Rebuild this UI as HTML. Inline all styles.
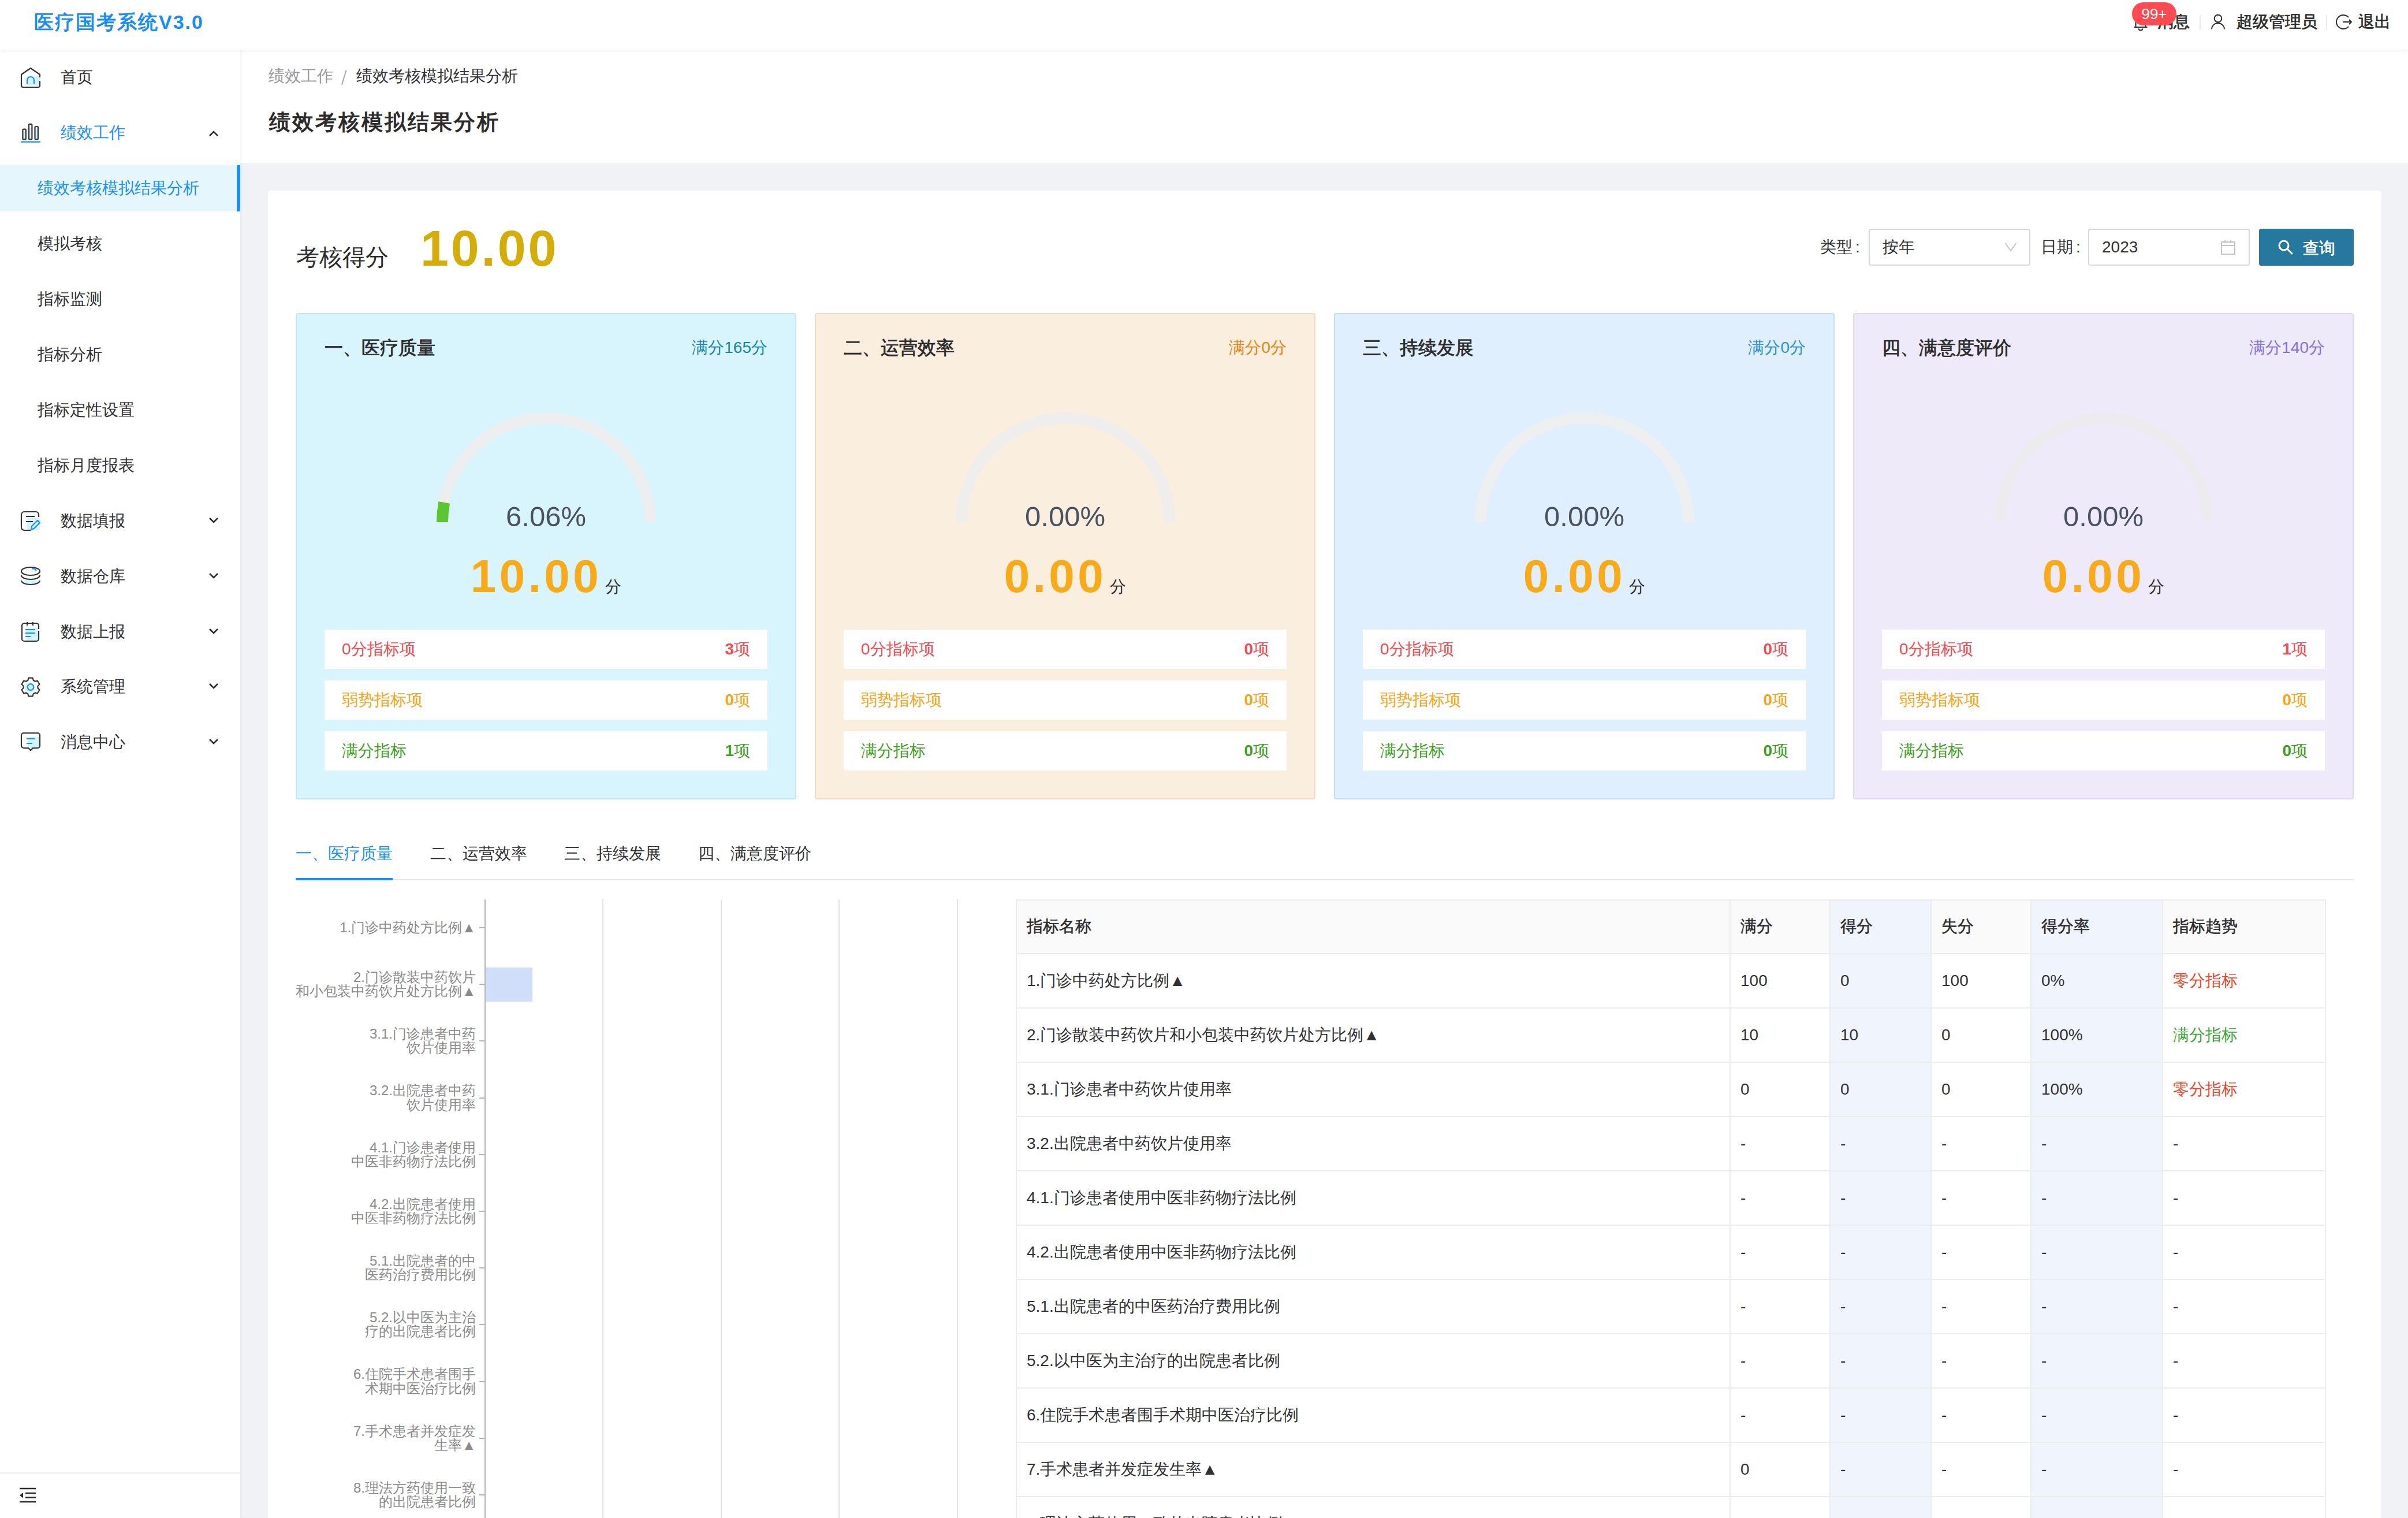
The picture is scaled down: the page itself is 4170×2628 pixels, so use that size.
<!DOCTYPE html><html><head><meta charset="utf-8"><style>
*{box-sizing:border-box;margin:0;padding:0}
html,body{width:4170px;height:2628px;overflow:hidden;background:#fff;font-family:"Liberation Sans",sans-serif;color:#303133}
.a{position:absolute;white-space:nowrap}
svg{position:absolute;overflow:visible}
</style></head><body>
<div class="a" style="left:416px;top:86px;width:3754px;height:2542px;background:#f0f2f5"></div>
<div class="a" style="left:416px;top:86px;width:3754px;height:196px;background:#fff"></div>
<div class="a" style="left:465px;top:112px;font-size:28px;line-height:40px;color:#97989b">绩效工作</div>
<svg style="left:588px;top:118px" width="16" height="32" viewBox="0 0 16 32"><line x1="11.5" y1="3.5" x2="4" y2="28.7" stroke="#a3a3a3" stroke-width="1.9"/></svg>
<div class="a" style="left:617px;top:112px;font-size:28px;line-height:40px;color:#303133">绩效考核模拟结果分析</div>
<div class="a" style="left:466px;top:184px;font-size:36.5px;line-height:56px;letter-spacing:3px;color:#2b2b2b;-webkit-text-stroke:1.2px #2b2b2b">绩效考核模拟结果分析</div>
<div class="a" style="left:464px;top:330px;width:3660px;height:2400px;background:#fff;border-radius:5px"></div>
<div class="a" style="left:513px;top:417px;font-size:40px;line-height:56px;color:#2b2b2b">考核得分</div>
<div class="a" style="left:728px;top:380px;font-size:88px;line-height:100px;font-weight:bold;color:#d4ad07;letter-spacing:3.8px">10.00</div>
<div class="a" style="left:3152px;top:408px;font-size:28px;line-height:40px;color:#303133">类型<span style="margin-left:5px">:</span></div>
<div class="a" style="left:3236px;top:396px;width:280px;height:64px;border:2px solid #d9d9d9;border-radius:4px;background:#fff"></div>
<div class="a" style="left:3260px;top:408px;font-size:28px;line-height:40px;color:#303133">按年</div>
<svg style="left:3471px;top:419px" width="22" height="18" viewBox="0 0 22 18"><path d="M1.5 2 L11 15 L20.5 2" fill="none" stroke="#c2c2c2" stroke-width="1.9"/></svg>
<div class="a" style="left:3534px;top:408px;font-size:28px;line-height:40px;color:#303133">日期<span style="margin-left:5px">:</span></div>
<div class="a" style="left:3616px;top:396px;width:280px;height:64px;border:2px solid #d9d9d9;border-radius:4px;background:#fff"></div>
<div class="a" style="left:3640px;top:408px;font-size:28px;line-height:40px;color:#303133">2023</div>
<svg style="left:3845px;top:414px" width="28" height="28" viewBox="0 0 28 28"><rect x="2" y="5" width="23" height="21" fill="none" stroke="#c4c4c4" stroke-width="2"/><line x1="2" y1="11" x2="25" y2="11" stroke="#c4c4c4" stroke-width="2"/><line x1="8" y1="1.5" x2="8" y2="7" stroke="#c4c4c4" stroke-width="2"/><line x1="18" y1="1.5" x2="18" y2="7" stroke="#c4c4c4" stroke-width="2"/></svg>
<div class="a" style="left:3912px;top:396px;width:164px;height:64px;background:#27789f;border-radius:4px"></div>
<svg style="left:3944px;top:414px" width="28" height="28" viewBox="0 0 28 28"><circle cx="11" cy="11" r="8" fill="none" stroke="#fff" stroke-width="3"/><line x1="17" y1="17" x2="25" y2="25" stroke="#fff" stroke-width="3" stroke-linecap="round"/></svg>
<div class="a" style="left:3988px;top:410px;font-size:28px;line-height:40px;color:#fff;-webkit-text-stroke:0.6px #fff">查询</div>
<div class="a" style="left:512px;top:542px;width:867px;height:842px;background:#d8f4fc;border:2px solid #c8e5ee;border-radius:4px"></div>
<div class="a" style="left:562px;top:582px;font-size:32px;line-height:40px;color:#2b2b2b;-webkit-text-stroke:0.8px #2b2b2b">一、医疗质量</div>
<div class="a" style="right:2841px;top:582px;font-size:28px;line-height:40px;color:#1687a9">满分165分</div>
<svg style="left:745.5px;top:704px" width="400" height="210" viewBox="745.5 704 400 210"><path d="M765.5 904 A180 180 0 0 1 1125.5 904" fill="none" stroke="#eceef0" stroke-width="20"/>
<path d="M765.5 904 A180 180 0 0 1 768.75 869.94" fill="none" stroke="#5bc72f" stroke-width="20"/>
</svg>
<div class="a" style="left:795.5px;top:862px;width:300px;text-align:center;font-size:49px;line-height:64px;color:#4a5261">6.06%</div>
<div class="a" style="left:512px;top:952px;width:867px;text-align:center;font-size:0"><span style="font-size:80px;line-height:92px;font-weight:bold;color:#f9aa17;letter-spacing:5.5px">10.00</span><span style="font-size:28px;line-height:40px;color:#2b2b2b;margin-left:6px">分</span></div>
<div class="a" style="left:562px;top:1090px;width:767px;height:68px;background:#fff"></div>
<div class="a" style="left:592px;top:1104px;font-size:28px;line-height:40px;color:#f54a50">0分指标项</div>
<div class="a" style="right:2871px;top:1104px;font-size:28px;line-height:40px;color:#f54a50"><b>3</b>项</div>
<div class="a" style="left:562px;top:1178px;width:767px;height:68px;background:#fff"></div>
<div class="a" style="left:592px;top:1192px;font-size:28px;line-height:40px;color:#f6a516">弱势指标项</div>
<div class="a" style="right:2871px;top:1192px;font-size:28px;line-height:40px;color:#f6a516"><b>0</b>项</div>
<div class="a" style="left:562px;top:1266px;width:767px;height:68px;background:#fff"></div>
<div class="a" style="left:592px;top:1280px;font-size:28px;line-height:40px;color:#3c9f22">满分指标</div>
<div class="a" style="right:2871px;top:1280px;font-size:28px;line-height:40px;color:#3c9f22"><b>1</b>项</div>
<div class="a" style="left:1411px;top:542px;width:867px;height:842px;background:#faeedf;border:2px solid #ecdcc8;border-radius:4px"></div>
<div class="a" style="left:1461px;top:582px;font-size:32px;line-height:40px;color:#2b2b2b;-webkit-text-stroke:0.8px #2b2b2b">二、运营效率</div>
<div class="a" style="right:1942px;top:582px;font-size:28px;line-height:40px;color:#e9830f">满分0分</div>
<svg style="left:1644.5px;top:704px" width="400" height="210" viewBox="1644.5 704 400 210"><path d="M1664.5 904 A180 180 0 0 1 2024.5 904" fill="none" stroke="#efeeec" stroke-width="20"/>
</svg>
<div class="a" style="left:1694.5px;top:862px;width:300px;text-align:center;font-size:49px;line-height:64px;color:#4a5261">0.00%</div>
<div class="a" style="left:1411px;top:952px;width:867px;text-align:center;font-size:0"><span style="font-size:80px;line-height:92px;font-weight:bold;color:#f9aa17;letter-spacing:5.5px">0.00</span><span style="font-size:28px;line-height:40px;color:#2b2b2b;margin-left:6px">分</span></div>
<div class="a" style="left:1461px;top:1090px;width:767px;height:68px;background:#fff"></div>
<div class="a" style="left:1491px;top:1104px;font-size:28px;line-height:40px;color:#f54a50">0分指标项</div>
<div class="a" style="right:1972px;top:1104px;font-size:28px;line-height:40px;color:#f54a50"><b>0</b>项</div>
<div class="a" style="left:1461px;top:1178px;width:767px;height:68px;background:#fff"></div>
<div class="a" style="left:1491px;top:1192px;font-size:28px;line-height:40px;color:#f6a516">弱势指标项</div>
<div class="a" style="right:1972px;top:1192px;font-size:28px;line-height:40px;color:#f6a516"><b>0</b>项</div>
<div class="a" style="left:1461px;top:1266px;width:767px;height:68px;background:#fff"></div>
<div class="a" style="left:1491px;top:1280px;font-size:28px;line-height:40px;color:#3c9f22">满分指标</div>
<div class="a" style="right:1972px;top:1280px;font-size:28px;line-height:40px;color:#3c9f22"><b>0</b>项</div>
<div class="a" style="left:2310px;top:542px;width:867px;height:842px;background:#dfeffd;border:2px solid #c8dcee;border-radius:4px"></div>
<div class="a" style="left:2360px;top:582px;font-size:32px;line-height:40px;color:#2b2b2b;-webkit-text-stroke:0.8px #2b2b2b">三、持续发展</div>
<div class="a" style="right:1043px;top:582px;font-size:28px;line-height:40px;color:#2c90d6">满分0分</div>
<svg style="left:2543.5px;top:704px" width="400" height="210" viewBox="2543.5 704 400 210"><path d="M2563.5 904 A180 180 0 0 1 2923.5 904" fill="none" stroke="#eeeff1" stroke-width="20"/>
</svg>
<div class="a" style="left:2593.5px;top:862px;width:300px;text-align:center;font-size:49px;line-height:64px;color:#4a5261">0.00%</div>
<div class="a" style="left:2310px;top:952px;width:867px;text-align:center;font-size:0"><span style="font-size:80px;line-height:92px;font-weight:bold;color:#f9aa17;letter-spacing:5.5px">0.00</span><span style="font-size:28px;line-height:40px;color:#2b2b2b;margin-left:6px">分</span></div>
<div class="a" style="left:2360px;top:1090px;width:767px;height:68px;background:#fff"></div>
<div class="a" style="left:2390px;top:1104px;font-size:28px;line-height:40px;color:#f54a50">0分指标项</div>
<div class="a" style="right:1073px;top:1104px;font-size:28px;line-height:40px;color:#f54a50"><b>0</b>项</div>
<div class="a" style="left:2360px;top:1178px;width:767px;height:68px;background:#fff"></div>
<div class="a" style="left:2390px;top:1192px;font-size:28px;line-height:40px;color:#f6a516">弱势指标项</div>
<div class="a" style="right:1073px;top:1192px;font-size:28px;line-height:40px;color:#f6a516"><b>0</b>项</div>
<div class="a" style="left:2360px;top:1266px;width:767px;height:68px;background:#fff"></div>
<div class="a" style="left:2390px;top:1280px;font-size:28px;line-height:40px;color:#3c9f22">满分指标</div>
<div class="a" style="right:1073px;top:1280px;font-size:28px;line-height:40px;color:#3c9f22"><b>0</b>项</div>
<div class="a" style="left:3209px;top:542px;width:867px;height:842px;background:#eeeafa;border:2px solid #dfdaee;border-radius:4px"></div>
<div class="a" style="left:3259px;top:582px;font-size:32px;line-height:40px;color:#2b2b2b;-webkit-text-stroke:0.8px #2b2b2b">四、满意度评价</div>
<div class="a" style="right:144px;top:582px;font-size:28px;line-height:40px;color:#8471de">满分140分</div>
<svg style="left:3442.5px;top:704px" width="400" height="210" viewBox="3442.5 704 400 210"><path d="M3462.5 904 A180 180 0 0 1 3822.5 904" fill="none" stroke="#ecebef" stroke-width="20"/>
</svg>
<div class="a" style="left:3492.5px;top:862px;width:300px;text-align:center;font-size:49px;line-height:64px;color:#4a5261">0.00%</div>
<div class="a" style="left:3209px;top:952px;width:867px;text-align:center;font-size:0"><span style="font-size:80px;line-height:92px;font-weight:bold;color:#f9aa17;letter-spacing:5.5px">0.00</span><span style="font-size:28px;line-height:40px;color:#2b2b2b;margin-left:6px">分</span></div>
<div class="a" style="left:3259px;top:1090px;width:767px;height:68px;background:#fff"></div>
<div class="a" style="left:3289px;top:1104px;font-size:28px;line-height:40px;color:#f54a50">0分指标项</div>
<div class="a" style="right:174px;top:1104px;font-size:28px;line-height:40px;color:#f54a50"><b>1</b>项</div>
<div class="a" style="left:3259px;top:1178px;width:767px;height:68px;background:#fff"></div>
<div class="a" style="left:3289px;top:1192px;font-size:28px;line-height:40px;color:#f6a516">弱势指标项</div>
<div class="a" style="right:174px;top:1192px;font-size:28px;line-height:40px;color:#f6a516"><b>0</b>项</div>
<div class="a" style="left:3259px;top:1266px;width:767px;height:68px;background:#fff"></div>
<div class="a" style="left:3289px;top:1280px;font-size:28px;line-height:40px;color:#3c9f22">满分指标</div>
<div class="a" style="right:174px;top:1280px;font-size:28px;line-height:40px;color:#3c9f22"><b>0</b>项</div>
<div class="a" style="left:512px;top:1522px;width:3564px;height:2px;background:#e4e7ed"></div>
<div class="a" style="left:512px;top:1458px;font-size:28px;line-height:40px;color:#1890ff">一、医疗质量</div>
<div class="a" style="left:745px;top:1458px;font-size:28px;line-height:40px;color:#303133">二、运营效率</div>
<div class="a" style="left:977px;top:1458px;font-size:28px;line-height:40px;color:#303133">三、持续发展</div>
<div class="a" style="left:1209px;top:1458px;font-size:28px;line-height:40px;color:#303133">四、满意度评价</div>
<div class="a" style="left:512px;top:1520px;width:168px;height:4px;background:#1890ff"></div>
<div class="a" style="left:839px;top:1557px;width:2px;height:1100px;background:#b6b6b6"></div>
<div class="a" style="left:1043px;top:1557px;width:2px;height:1100px;background:#e3e3e3"></div>
<div class="a" style="left:1248px;top:1557px;width:2px;height:1100px;background:#e3e3e3"></div>
<div class="a" style="left:1452px;top:1557px;width:2px;height:1100px;background:#e3e3e3"></div>
<div class="a" style="left:1657px;top:1557px;width:2px;height:1100px;background:#e3e3e3"></div>
<div class="a" style="left:830px;top:1605.0px;width:10px;height:2px;background:#b6b6b6"></div>
<div class="a" style="right:3346px;top:1593.8px;text-align:right;font-size:24px;line-height:24.3px;color:#8a8a8a">1.门诊中药处方比例▲</div>
<div class="a" style="left:830px;top:1703.2px;width:10px;height:2px;background:#b6b6b6"></div>
<div class="a" style="right:3346px;top:1679.9px;text-align:right;font-size:24px;line-height:24.3px;color:#8a8a8a">2.门诊散装中药饮片<br>和小包装中药饮片处方比例▲</div>
<div class="a" style="left:830px;top:1801.4px;width:10px;height:2px;background:#b6b6b6"></div>
<div class="a" style="right:3346px;top:1778.1px;text-align:right;font-size:24px;line-height:24.3px;color:#8a8a8a">3.1.门诊患者中药<br>饮片使用率</div>
<div class="a" style="left:830px;top:1899.6px;width:10px;height:2px;background:#b6b6b6"></div>
<div class="a" style="right:3346px;top:1876.3px;text-align:right;font-size:24px;line-height:24.3px;color:#8a8a8a">3.2.出院患者中药<br>饮片使用率</div>
<div class="a" style="left:830px;top:1997.8px;width:10px;height:2px;background:#b6b6b6"></div>
<div class="a" style="right:3346px;top:1974.5px;text-align:right;font-size:24px;line-height:24.3px;color:#8a8a8a">4.1.门诊患者使用<br>中医非药物疗法比例</div>
<div class="a" style="left:830px;top:2096.0px;width:10px;height:2px;background:#b6b6b6"></div>
<div class="a" style="right:3346px;top:2072.7px;text-align:right;font-size:24px;line-height:24.3px;color:#8a8a8a">4.2.出院患者使用<br>中医非药物疗法比例</div>
<div class="a" style="left:830px;top:2194.2px;width:10px;height:2px;background:#b6b6b6"></div>
<div class="a" style="right:3346px;top:2170.9px;text-align:right;font-size:24px;line-height:24.3px;color:#8a8a8a">5.1.出院患者的中<br>医药治疗费用比例</div>
<div class="a" style="left:830px;top:2292.4px;width:10px;height:2px;background:#b6b6b6"></div>
<div class="a" style="right:3346px;top:2269.1px;text-align:right;font-size:24px;line-height:24.3px;color:#8a8a8a">5.2.以中医为主治<br>疗的出院患者比例</div>
<div class="a" style="left:830px;top:2390.6px;width:10px;height:2px;background:#b6b6b6"></div>
<div class="a" style="right:3346px;top:2367.3px;text-align:right;font-size:24px;line-height:24.3px;color:#8a8a8a">6.住院手术患者围手<br>术期中医治疗比例</div>
<div class="a" style="left:830px;top:2488.8px;width:10px;height:2px;background:#b6b6b6"></div>
<div class="a" style="right:3346px;top:2465.5px;text-align:right;font-size:24px;line-height:24.3px;color:#8a8a8a">7.手术患者并发症发<br>生率▲</div>
<div class="a" style="left:830px;top:2587.0px;width:10px;height:2px;background:#b6b6b6"></div>
<div class="a" style="right:3346px;top:2563.7px;text-align:right;font-size:24px;line-height:24.3px;color:#8a8a8a">8.理法方药使用一致<br>的出院患者比例</div>
<div class="a" style="left:841px;top:1675px;width:81px;height:59px;background:#d0defa"></div>
<div class="a" style="left:3169px;top:1557px;width:175px;height:1100px;background:#eff4fd"></div>
<div class="a" style="left:3517px;top:1557px;width:228px;height:1100px;background:#eff4fd"></div>
<div class="a" style="left:1760px;top:1557px;width:1409px;height:94px;background:#fafafa"></div>
<div class="a" style="left:3344px;top:1557px;width:173px;height:94px;background:#fafafa"></div>
<div class="a" style="left:3745px;top:1557px;width:282px;height:94px;background:#fafafa"></div>
<div class="a" style="left:1760px;top:1557px;width:2267px;height:2px;background:#ebecee"></div>
<div class="a" style="left:1760px;top:1650px;width:2267px;height:2px;background:#ebecee"></div>
<div class="a" style="left:1760px;top:1744px;width:2267px;height:2px;background:#ebecee"></div>
<div class="a" style="left:1760px;top:1838px;width:2267px;height:2px;background:#ebecee"></div>
<div class="a" style="left:1760px;top:1932px;width:2267px;height:2px;background:#ebecee"></div>
<div class="a" style="left:1760px;top:2026px;width:2267px;height:2px;background:#ebecee"></div>
<div class="a" style="left:1760px;top:2120px;width:2267px;height:2px;background:#ebecee"></div>
<div class="a" style="left:1760px;top:2214px;width:2267px;height:2px;background:#ebecee"></div>
<div class="a" style="left:1760px;top:2308px;width:2267px;height:2px;background:#ebecee"></div>
<div class="a" style="left:1760px;top:2402px;width:2267px;height:2px;background:#ebecee"></div>
<div class="a" style="left:1760px;top:2496px;width:2267px;height:2px;background:#ebecee"></div>
<div class="a" style="left:1760px;top:2590px;width:2267px;height:2px;background:#ebecee"></div>
<div class="a" style="left:1760px;top:2684px;width:2267px;height:2px;background:#ebecee"></div>
<div class="a" style="left:1759px;top:1557px;width:2px;height:1100px;background:#ebecee"></div>
<div class="a" style="left:2995px;top:1557px;width:2px;height:1100px;background:#ebecee"></div>
<div class="a" style="left:3168px;top:1557px;width:2px;height:1100px;background:#ebecee"></div>
<div class="a" style="left:3343px;top:1557px;width:2px;height:1100px;background:#ebecee"></div>
<div class="a" style="left:3516px;top:1557px;width:2px;height:1100px;background:#ebecee"></div>
<div class="a" style="left:3744px;top:1557px;width:2px;height:1100px;background:#ebecee"></div>
<div class="a" style="left:4026px;top:1557px;width:2px;height:1100px;background:#ebecee"></div>
<div class="a" style="left:1778px;top:1584px;font-size:28px;line-height:40px;color:#2b2b2b;-webkit-text-stroke:0.5px #2b2b2b">指标名称</div>
<div class="a" style="left:3014px;top:1584px;font-size:28px;line-height:40px;color:#2b2b2b;-webkit-text-stroke:0.5px #2b2b2b">满分</div>
<div class="a" style="left:3187px;top:1584px;font-size:28px;line-height:40px;color:#2b2b2b;-webkit-text-stroke:0.5px #2b2b2b">得分</div>
<div class="a" style="left:3362px;top:1584px;font-size:28px;line-height:40px;color:#2b2b2b;-webkit-text-stroke:0.5px #2b2b2b">失分</div>
<div class="a" style="left:3535px;top:1584px;font-size:28px;line-height:40px;color:#2b2b2b;-webkit-text-stroke:0.5px #2b2b2b">得分率</div>
<div class="a" style="left:3763px;top:1584px;font-size:28px;line-height:40px;color:#2b2b2b;-webkit-text-stroke:0.5px #2b2b2b">指标趋势</div>
<div class="a" style="left:1778px;top:1678px;font-size:28px;line-height:40px;color:#303133">1.门诊中药处方比例▲</div>
<div class="a" style="left:3014px;top:1678px;font-size:28px;line-height:40px;color:#303133">100</div>
<div class="a" style="left:3187px;top:1678px;font-size:28px;line-height:40px;color:#303133">0</div>
<div class="a" style="left:3362px;top:1678px;font-size:28px;line-height:40px;color:#303133">100</div>
<div class="a" style="left:3535px;top:1678px;font-size:28px;line-height:40px;color:#303133">0%</div>
<div class="a" style="left:3763px;top:1678px;font-size:28px;line-height:40px;color:#e5492d">零分指标</div>
<div class="a" style="left:1778px;top:1772px;font-size:28px;line-height:40px;color:#303133">2.门诊散装中药饮片和小包装中药饮片处方比例▲</div>
<div class="a" style="left:3014px;top:1772px;font-size:28px;line-height:40px;color:#303133">10</div>
<div class="a" style="left:3187px;top:1772px;font-size:28px;line-height:40px;color:#303133">10</div>
<div class="a" style="left:3362px;top:1772px;font-size:28px;line-height:40px;color:#303133">0</div>
<div class="a" style="left:3535px;top:1772px;font-size:28px;line-height:40px;color:#303133">100%</div>
<div class="a" style="left:3763px;top:1772px;font-size:28px;line-height:40px;color:#3aa434">满分指标</div>
<div class="a" style="left:1778px;top:1866px;font-size:28px;line-height:40px;color:#303133">3.1.门诊患者中药饮片使用率</div>
<div class="a" style="left:3014px;top:1866px;font-size:28px;line-height:40px;color:#303133">0</div>
<div class="a" style="left:3187px;top:1866px;font-size:28px;line-height:40px;color:#303133">0</div>
<div class="a" style="left:3362px;top:1866px;font-size:28px;line-height:40px;color:#303133">0</div>
<div class="a" style="left:3535px;top:1866px;font-size:28px;line-height:40px;color:#303133">100%</div>
<div class="a" style="left:3763px;top:1866px;font-size:28px;line-height:40px;color:#e5492d">零分指标</div>
<div class="a" style="left:1778px;top:1960px;font-size:28px;line-height:40px;color:#303133">3.2.出院患者中药饮片使用率</div>
<div class="a" style="left:3014px;top:1960px;font-size:28px;line-height:40px;color:#303133">-</div>
<div class="a" style="left:3187px;top:1960px;font-size:28px;line-height:40px;color:#303133">-</div>
<div class="a" style="left:3362px;top:1960px;font-size:28px;line-height:40px;color:#303133">-</div>
<div class="a" style="left:3535px;top:1960px;font-size:28px;line-height:40px;color:#303133">-</div>
<div class="a" style="left:3763px;top:1960px;font-size:28px;line-height:40px;color:#303133">-</div>
<div class="a" style="left:1778px;top:2054px;font-size:28px;line-height:40px;color:#303133">4.1.门诊患者使用中医非药物疗法比例</div>
<div class="a" style="left:3014px;top:2054px;font-size:28px;line-height:40px;color:#303133">-</div>
<div class="a" style="left:3187px;top:2054px;font-size:28px;line-height:40px;color:#303133">-</div>
<div class="a" style="left:3362px;top:2054px;font-size:28px;line-height:40px;color:#303133">-</div>
<div class="a" style="left:3535px;top:2054px;font-size:28px;line-height:40px;color:#303133">-</div>
<div class="a" style="left:3763px;top:2054px;font-size:28px;line-height:40px;color:#303133">-</div>
<div class="a" style="left:1778px;top:2148px;font-size:28px;line-height:40px;color:#303133">4.2.出院患者使用中医非药物疗法比例</div>
<div class="a" style="left:3014px;top:2148px;font-size:28px;line-height:40px;color:#303133">-</div>
<div class="a" style="left:3187px;top:2148px;font-size:28px;line-height:40px;color:#303133">-</div>
<div class="a" style="left:3362px;top:2148px;font-size:28px;line-height:40px;color:#303133">-</div>
<div class="a" style="left:3535px;top:2148px;font-size:28px;line-height:40px;color:#303133">-</div>
<div class="a" style="left:3763px;top:2148px;font-size:28px;line-height:40px;color:#303133">-</div>
<div class="a" style="left:1778px;top:2242px;font-size:28px;line-height:40px;color:#303133">5.1.出院患者的中医药治疗费用比例</div>
<div class="a" style="left:3014px;top:2242px;font-size:28px;line-height:40px;color:#303133">-</div>
<div class="a" style="left:3187px;top:2242px;font-size:28px;line-height:40px;color:#303133">-</div>
<div class="a" style="left:3362px;top:2242px;font-size:28px;line-height:40px;color:#303133">-</div>
<div class="a" style="left:3535px;top:2242px;font-size:28px;line-height:40px;color:#303133">-</div>
<div class="a" style="left:3763px;top:2242px;font-size:28px;line-height:40px;color:#303133">-</div>
<div class="a" style="left:1778px;top:2336px;font-size:28px;line-height:40px;color:#303133">5.2.以中医为主治疗的出院患者比例</div>
<div class="a" style="left:3014px;top:2336px;font-size:28px;line-height:40px;color:#303133">-</div>
<div class="a" style="left:3187px;top:2336px;font-size:28px;line-height:40px;color:#303133">-</div>
<div class="a" style="left:3362px;top:2336px;font-size:28px;line-height:40px;color:#303133">-</div>
<div class="a" style="left:3535px;top:2336px;font-size:28px;line-height:40px;color:#303133">-</div>
<div class="a" style="left:3763px;top:2336px;font-size:28px;line-height:40px;color:#303133">-</div>
<div class="a" style="left:1778px;top:2430px;font-size:28px;line-height:40px;color:#303133">6.住院手术患者围手术期中医治疗比例</div>
<div class="a" style="left:3014px;top:2430px;font-size:28px;line-height:40px;color:#303133">-</div>
<div class="a" style="left:3187px;top:2430px;font-size:28px;line-height:40px;color:#303133">-</div>
<div class="a" style="left:3362px;top:2430px;font-size:28px;line-height:40px;color:#303133">-</div>
<div class="a" style="left:3535px;top:2430px;font-size:28px;line-height:40px;color:#303133">-</div>
<div class="a" style="left:3763px;top:2430px;font-size:28px;line-height:40px;color:#303133">-</div>
<div class="a" style="left:1778px;top:2524px;font-size:28px;line-height:40px;color:#303133">7.手术患者并发症发生率▲</div>
<div class="a" style="left:3014px;top:2524px;font-size:28px;line-height:40px;color:#303133">0</div>
<div class="a" style="left:3187px;top:2524px;font-size:28px;line-height:40px;color:#303133">-</div>
<div class="a" style="left:3362px;top:2524px;font-size:28px;line-height:40px;color:#303133">-</div>
<div class="a" style="left:3535px;top:2524px;font-size:28px;line-height:40px;color:#303133">-</div>
<div class="a" style="left:3763px;top:2524px;font-size:28px;line-height:40px;color:#303133">-</div>
<div class="a" style="left:1778px;top:2618px;font-size:28px;line-height:40px;color:#303133">8.理法方药使用一致的出院患者比例</div>
<div class="a" style="left:3014px;top:2618px;font-size:28px;line-height:40px;color:#303133">-</div>
<div class="a" style="left:3187px;top:2618px;font-size:28px;line-height:40px;color:#303133">-</div>
<div class="a" style="left:3362px;top:2618px;font-size:28px;line-height:40px;color:#303133">-</div>
<div class="a" style="left:3535px;top:2618px;font-size:28px;line-height:40px;color:#303133">-</div>
<div class="a" style="left:3763px;top:2618px;font-size:28px;line-height:40px;color:#303133">-</div>
<div class="a" style="left:0;top:86px;width:416px;height:2542px;background:#fff;box-shadow:2px 0 6px rgba(0,21,41,.05)"></div>
<div class="a" style="left:0;top:286px;width:416px;height:80px;background:#e6f6fd"></div>
<div class="a" style="left:410px;top:286px;width:6px;height:80px;background:#1890ff"></div>
<div class="a" style="left:105px;top:114px;font-size:28px;line-height:40px;color:#303133">首页</div>
<svg style="left:36px;top:117px" width="34" height="35" viewBox="0 0 34 35"><rect x="10" y="15" width="23" height="16" fill="#d4f3fd"/><path d="M33 17 V12 L17 1 L1 12 V31 a3 3 0 0 0 3 3 H30 a3 3 0 0 0 3 -3 V23" fill="none" stroke="#333" stroke-width="2.2" stroke-linejoin="round"/><path d="M11 28 V22 a6 6 0 0 1 12 0 V28" fill="none" stroke="#1890ff" stroke-width="2.2"/></svg>
<div class="a" style="left:105px;top:210px;font-size:28px;line-height:40px;color:#1890ff">绩效工作</div>
<svg style="left:36px;top:213px" width="34" height="35" viewBox="0 0 34 35"><rect x="3.4" y="16" width="5.4" height="12" fill="#d4f3fd"/><rect x="14" y="8" width="5.4" height="20" fill="#d4f3fd"/><rect x="24.5" y="10" width="5.4" height="18" fill="#d4f3fd"/><rect x="3.4" y="10.6" width="5.4" height="17.6" rx="1.5" fill="none" stroke="#333" stroke-width="2.2"/><rect x="14" y="1.8" width="5.4" height="26.4" rx="1.5" fill="none" stroke="#333" stroke-width="2.2"/><rect x="24.5" y="6" width="5.4" height="22.2" rx="1.5" fill="none" stroke="#333" stroke-width="2.2"/><line x1="0" y1="32.6" x2="34" y2="32.6" stroke="#1890ff" stroke-width="2.4"/></svg>
<svg style="left:361px;top:225px" width="18" height="12" viewBox="0 0 18 12"><path d="M2 10 L9 3 L16 10" fill="none" stroke="#2b2b2b" stroke-width="2.6"/></svg>
<div class="a" style="left:65px;top:306px;font-size:28px;line-height:40px;color:#1890ff">绩效考核模拟结果分析</div>
<div class="a" style="left:65px;top:402px;font-size:28px;line-height:40px;color:#303133">模拟考核</div>
<div class="a" style="left:65px;top:498px;font-size:28px;line-height:40px;color:#303133">指标监测</div>
<div class="a" style="left:65px;top:594px;font-size:28px;line-height:40px;color:#303133">指标分析</div>
<div class="a" style="left:65px;top:690px;font-size:28px;line-height:40px;color:#303133">指标定性设置</div>
<div class="a" style="left:65px;top:786px;font-size:28px;line-height:40px;color:#303133">指标月度报表</div>
<div class="a" style="left:105px;top:882px;font-size:28px;line-height:40px;color:#303133">数据填报</div>
<svg style="left:36px;top:885px" width="34" height="35" viewBox="0 0 34 35"><rect x="11" y="11" width="22" height="22" rx="3" fill="#d4f3fd"/><path d="M17 33 H6 a5 5 0 0 1 -5 -5 V6 a5 5 0 0 1 5 -5 H26 a5 5 0 0 1 5 5 V10" fill="none" stroke="#333" stroke-width="2.2"/><path d="M9 9 H24 M9 18 H21" stroke="#333" stroke-width="2.2"/><path d="M18 32 L19 26 L29 16 L33 20 L23 30 Z" fill="none" stroke="#1890ff" stroke-width="2.2" stroke-linejoin="round"/></svg>
<svg style="left:361px;top:895px" width="18" height="12" viewBox="0 0 18 12"><path d="M2 2 L9 9 L16 2" fill="none" stroke="#2b2b2b" stroke-width="2.6"/></svg>
<div class="a" style="left:105px;top:978px;font-size:28px;line-height:40px;color:#303133">数据仓库</div>
<svg style="left:36px;top:981px" width="34" height="35" viewBox="0 0 34 35"><ellipse cx="17" cy="26" rx="12" ry="5" fill="#d4f3fd"/><ellipse cx="17" cy="8" rx="16" ry="7" fill="none" stroke="#333" stroke-width="2.2"/><path d="M1 15 a16 7 0 0 0 32 0 M1 24 a16 7 0 0 0 32 0" fill="none" stroke="#333" stroke-width="2.2"/><path d="M19 3.5 a6 3 0 0 1 7 4" fill="none" stroke="#1890ff" stroke-width="2.2"/></svg>
<svg style="left:361px;top:991px" width="18" height="12" viewBox="0 0 18 12"><path d="M2 2 L9 9 L16 2" fill="none" stroke="#2b2b2b" stroke-width="2.6"/></svg>
<div class="a" style="left:105px;top:1074px;font-size:28px;line-height:40px;color:#303133">数据上报</div>
<svg style="left:36px;top:1077px" width="34" height="35" viewBox="0 0 34 35"><rect x="9" y="10" width="22" height="23" rx="3" fill="#d4f3fd"/><path d="M31 12 V6 a4 4 0 0 0 -4 -4 H6 a4 4 0 0 0 -4 4 V29 a4 4 0 0 0 4 4 H27 a4 4 0 0 0 4 -4 V15" fill="none" stroke="#333" stroke-width="2.2"/><path d="M11 0 V6 M21 0 V6" stroke="#333" stroke-width="2.2"/><path d="M8 13 H25 M8 19 H25 M8 25 H17" stroke="#1890ff" stroke-width="2.2"/></svg>
<svg style="left:361px;top:1087px" width="18" height="12" viewBox="0 0 18 12"><path d="M2 2 L9 9 L16 2" fill="none" stroke="#2b2b2b" stroke-width="2.6"/></svg>
<div class="a" style="left:105px;top:1169px;font-size:28px;line-height:40px;color:#303133">系统管理</div>
<svg style="left:36px;top:1172px" width="34" height="35" viewBox="0 0 34 35"><circle cx="15.5" cy="19" r="9" fill="#d4f3fd"/><path d="M12.28 5.82 L13.36 1.72 L20.64 1.72 L21.72 5.82 L24.76 7.57 L28.85 6.45 L32.49 12.76 L29.48 15.75 L29.48 19.25 L32.49 22.24 L28.85 28.55 L24.76 27.43 L21.72 29.18 L20.64 33.28 L13.36 33.28 L12.28 29.18 L9.24 27.43 L5.15 28.55 L1.51 22.24 L4.52 19.25 L4.52 15.75 L1.51 12.76 L5.15 6.45 L9.24 7.57 Z" fill="none" stroke="#333" stroke-width="2.2" stroke-linejoin="round"/><circle cx="17" cy="17.5" r="5.3" fill="none" stroke="#1890ff" stroke-width="2.2"/></svg>
<svg style="left:361px;top:1182px" width="18" height="12" viewBox="0 0 18 12"><path d="M2 2 L9 9 L16 2" fill="none" stroke="#2b2b2b" stroke-width="2.6"/></svg>
<div class="a" style="left:105px;top:1265px;font-size:28px;line-height:40px;color:#303133">消息中心</div>
<svg style="left:36px;top:1268px" width="34" height="35" viewBox="0 0 34 35"><rect x="12" y="8" width="22" height="21" rx="3" fill="#d4f3fd"/><path d="M5 1 H29 a4 4 0 0 1 4 4 V23 a4 4 0 0 1 -4 4 H21 L17 31 L13 27 H5 a4 4 0 0 1 -4 -4 V5 a4 4 0 0 1 4 -4 Z" fill="none" stroke="#333" stroke-width="2.2" stroke-linejoin="round"/><path d="M10 11 H25 M10 19 H20" stroke="#1890ff" stroke-width="2.2"/></svg>
<svg style="left:361px;top:1278px" width="18" height="12" viewBox="0 0 18 12"><path d="M2 2 L9 9 L16 2" fill="none" stroke="#2b2b2b" stroke-width="2.6"/></svg>
<div class="a" style="left:0;top:2549px;width:416px;height:2px;background:#eceef1"></div>
<svg style="left:34px;top:2575px" width="29" height="28" viewBox="0 0 29 28"><path d="M0 2 H28 M10 10 H28 M10 17.5 H28 M0 25 H28" stroke="#2b2b2b" stroke-width="2.4"/><path d="M0 13.75 L6 9 V18.5 Z" fill="#2b2b2b"/></svg>
<div class="a" style="left:0;top:0;width:4170px;height:86px;background:#fff;box-shadow:0 2px 8px rgba(0,21,41,.07)"></div>
<div class="a" style="left:59px;top:14px;font-size:34px;line-height:48px;font-weight:bold;color:#178cff;letter-spacing:2px">医疗国考系统V3.0</div>
<svg style="left:3694px;top:22px" width="26" height="32" viewBox="0 0 26 32"><path d="M4.5 25 V14 a8.5 8.5 0 0 1 17 0 V25 M1.5 25 H24.5 M9.5 27.5 a3.5 3 0 0 0 7 0" fill="none" stroke="#2b2b2b" stroke-width="2"/></svg>
<div class="a" style="left:3736px;top:18px;font-size:28px;line-height:40px;color:#2b2b2b;-webkit-text-stroke:0.7px #2b2b2b">消息</div>
<div class="a" style="left:3692px;top:4px;width:77px;height:40px;border-radius:20px;background:#fe4a50;color:#fff;font-size:26px;line-height:40px;text-align:center">99+</div>
<div class="a" style="left:3809px;top:26px;width:2px;height:26px;background:#e8e8e8"></div>
<svg style="left:3828px;top:24px" width="26" height="28" viewBox="0 0 26 28"><circle cx="13" cy="8" r="6.3" fill="none" stroke="#2b2b2b" stroke-width="1.9"/><path d="M2 26.5 a11 10.5 0 0 1 22 0" fill="none" stroke="#2b2b2b" stroke-width="1.9"/></svg>
<div class="a" style="left:3873px;top:18px;font-size:28px;line-height:40px;color:#2b2b2b;-webkit-text-stroke:0.7px #2b2b2b">超级管理员</div>
<div class="a" style="left:4028px;top:26px;width:2px;height:26px;background:#e8e8e8"></div>
<svg style="left:4045px;top:24px" width="30" height="28" viewBox="0 0 30 28"><path d="M22 6 A12 12 0 1 0 22 22" fill="none" stroke="#2b2b2b" stroke-width="1.9"/><path d="M12 14 H27 M23 10 L27 14 L23 18" fill="none" stroke="#2b2b2b" stroke-width="1.9"/></svg>
<div class="a" style="left:4084px;top:18px;font-size:28px;line-height:40px;color:#2b2b2b;-webkit-text-stroke:0.7px #2b2b2b">退出</div>
</body></html>
